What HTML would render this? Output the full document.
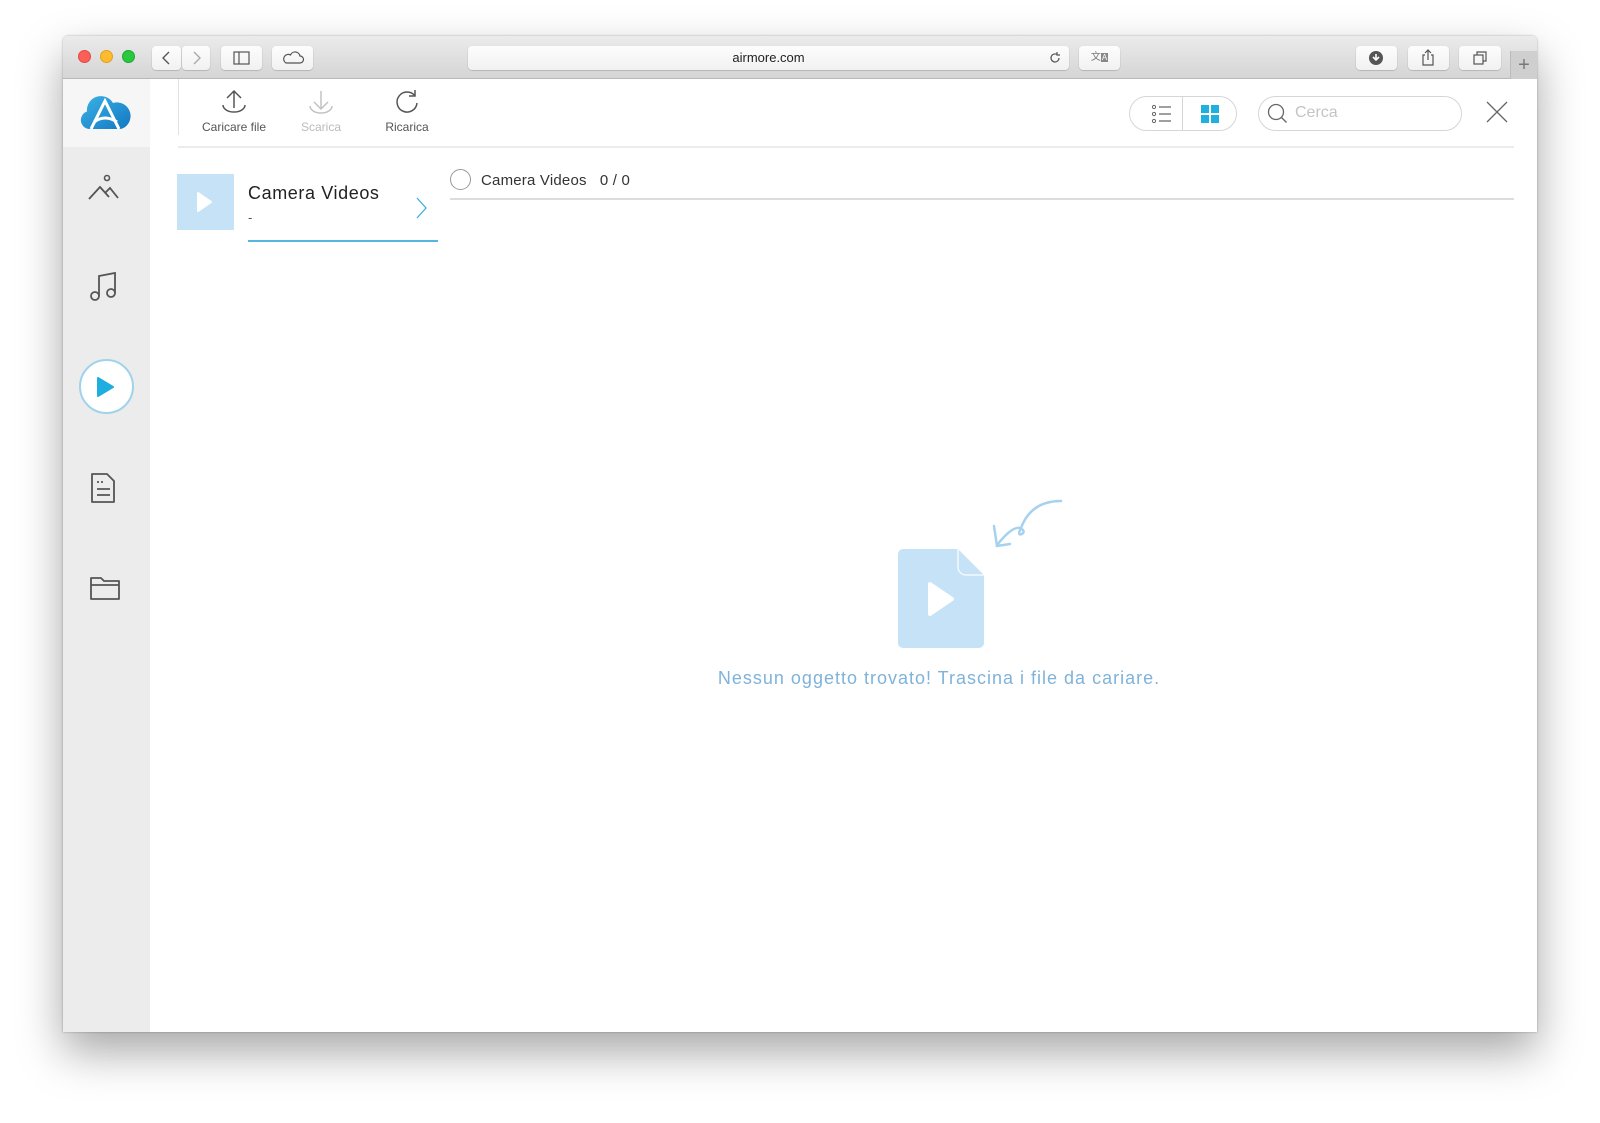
<!DOCTYPE html>
<html><head><meta charset="utf-8"><style>
*{margin:0;padding:0;box-sizing:border-box}
body{width:1600px;height:1123px;background:#fff;position:relative;overflow:hidden;font-family:"Liberation Sans",sans-serif}
.win{position:absolute;left:63px;top:36px;width:1474px;height:996px;background:#fff;border-radius:5px 5px 0 0;box-shadow:0 20px 45px rgba(0,0,0,.35),0 0 2px rgba(0,0,0,.3);overflow:hidden}
.tb{position:absolute;left:0;top:0;width:100%;height:43px;background:linear-gradient(#ebebeb,#d5d5d5);border-bottom:1px solid #b9b9b9}
.dot{position:absolute;top:14px;width:13px;height:13px;border-radius:50%}
.btn{position:absolute;top:10px;height:24px;background:linear-gradient(#fdfdfd,#f1f1f1);border-radius:4px;box-shadow:0 0.5px 1px rgba(0,0,0,.3)}
.abs{position:absolute}
.side{position:absolute;left:0;top:43px;width:87px;height:953px;background:#ececec}
.lbl{position:absolute;font-size:12px;color:#555;text-align:center;width:90px}
</style></head><body>
<div class="win">
 <div class="tb">
  <div class="dot" style="left:15px;background:#fc5f57;border:0.5px solid #de4a42"></div>
  <div class="dot" style="left:37px;background:#fdbc2e;border:0.5px solid #dea123"></div>
  <div class="dot" style="left:59px;background:#28c840;border:0.5px solid #1eab2e"></div>
  <div class="btn" style="left:89px;width:29px"><svg width="29" height="24"><path d="M17 6l-6 6 6 6" stroke="#555" stroke-width="1.4" fill="none"/></svg></div>
  <div class="btn" style="left:119px;width:28px"><svg width="28" height="24"><path d="M12 6l6 6-6 6" stroke="#aaa" stroke-width="1.4" fill="none"/></svg></div>
  <div class="btn" style="left:158px;width:41px"><svg width="41" height="24"><rect x="13" y="6" width="15" height="12" stroke="#555" fill="none" stroke-width="1.2"/><path d="M18 6v12" stroke="#555" stroke-width="1.2"/></svg></div>
  <div class="btn" style="left:209px;width:41px"><svg width="41" height="24"><path d="M14 17h14a3.5 3.5 0 0 0 0-7 5 5 0 0 0-9.5-1 3.8 3.8 0 0 0-4.5 8z" stroke="#555" fill="none" stroke-width="1.2"/></svg></div>
  <div class="btn" style="left:405px;width:601px;text-align:center;font-size:13px;line-height:24px;color:#222">airmore.com<svg class="abs" style="right:6px;top:4px" width="16" height="16"><path d="M12 8a4 4 0 1 1-2-3.5M10 2v3h3" stroke="#555" fill="none" stroke-width="1.2"/></svg></div>
  <div class="btn" style="left:1016px;width:41px;font-size:10px;color:#777;text-align:center;line-height:24px">文<span style="background:#888;color:#fff;font-size:8px;padding:0 1px">A</span></div>
  <div class="btn" style="left:1293px;width:41px"><svg width="41" height="24"><circle cx="20" cy="12" r="7" fill="#555"/><path d="M20 8v6M17 11l3 3 3-3" stroke="#fff" stroke-width="1.6" fill="none"/></svg></div>
  <div class="btn" style="left:1345px;width:41px"><svg width="41" height="24"><path d="M17 9h-2v10h10V9h-2M20 14V4M17 7l3-3 3 3" stroke="#555" fill="none" stroke-width="1.2"/></svg></div>
  <div class="btn" style="left:1396px;width:42px"><svg width="42" height="24"><rect x="15" y="9" width="9" height="9" stroke="#555" fill="none" stroke-width="1.2"/><path d="M18 9V6h9v9h-3" stroke="#555" fill="none" stroke-width="1.2"/></svg></div>
  <div class="abs" style="left:1447px;top:15px;width:27px;height:28px;background:#cfcfcf;border-left:1px solid #bbb;color:#777;font-size:20px;text-align:center;line-height:28px">+</div>
 </div>
 <div class="side">
  <div class="abs" style="left:0;top:0;width:87px;height:68px;background:#f6f6f6"></div>
  <svg class="abs" style="left:16px;top:14px" width="52" height="40" viewBox="0 0 52 40"><defs><linearGradient id="g" x1="0" y1="0" x2="1" y2="1"><stop offset="0" stop-color="#3bb3e6"/><stop offset="1" stop-color="#1477c2"/></linearGradient></defs><path d="M10 36a9 9 0 0 1-2-17.5A14 14 0 0 1 34 10a11 11 0 0 1 8 26z" fill="url(#g)"/><path d="M12 36L26 8l14 28M15 29q11-8 23 0" stroke="#fff" stroke-width="3" fill="none"/></svg>
  <svg class="abs" style="left:24px;top:94px" width="38" height="30"><circle cx="20" cy="5" r="2.5" stroke="#555" fill="none" stroke-width="1.6"/><path d="M2 26l11-12 9 10M18 20l5-5 8 10" stroke="#555" fill="none" stroke-width="1.8"/></svg>
  <svg class="abs" style="left:24px;top:191px" width="34" height="34"><circle cx="8" cy="26" r="4" stroke="#555" fill="none" stroke-width="1.8"/><circle cx="24" cy="23" r="4" stroke="#555" fill="none" stroke-width="1.8"/><path d="M12 26V6l16-3v20" stroke="#555" fill="none" stroke-width="1.8"/></svg>
  <div class="abs" style="left:16px;top:280px;width:55px;height:55px;border-radius:50%;background:#fff;border:2px solid #9fd3ec"></div>
  <svg class="abs" style="left:32px;top:296px" width="24" height="24"><path d="M3 3l15 9-15 9z" fill="#1eaee0" stroke="#1eaee0" stroke-linejoin="round" stroke-width="2"/></svg>
  <svg class="abs" style="left:26px;top:392px" width="30" height="34"><path d="M3 3h15l7 7v21H3z" stroke="#555" fill="none" stroke-width="1.8" stroke-linejoin="round"/><path d="M8 11h2M12 11h2M8 18h13M8 24h13" stroke="#555" stroke-width="1.8"/></svg>
  <svg class="abs" style="left:25px;top:494px" width="34" height="30"><path d="M3 5h10l3 3h15v18H3zM3 12h28" stroke="#555" fill="none" stroke-width="1.8" stroke-linejoin="round"/></svg>
 </div>
 <div class="abs" style="left:115px;top:43px;width:1px;height:56px;background:#e2e2e2"></div>
 <div class="abs" style="left:115px;top:110px;width:1336px;height:2px;background:#ececec"></div>
 <svg class="abs" style="left:156px;top:52px" width="30" height="30"><path d="M15 3v17M8 10l7-7 7 7M4 17a11 7 0 0 0 22 0" stroke="#555" fill="none" stroke-width="1.5"/></svg>
 <div class="lbl" style="left:126px;top:84px">Caricare file</div>
 <svg class="abs" style="left:243px;top:52px" width="30" height="30"><path d="M15 3v18M8 14l7 7 7-7M4 18a11 7 0 0 0 22 0" stroke="#c2c2c2" fill="none" stroke-width="1.5"/></svg>
 <div class="lbl" style="left:213px;top:84px;color:#bbb">Scarica</div>
 <svg class="abs" style="left:329px;top:52px" width="30" height="30"><path d="M23 8A10 10 0 1 0 25 15M23 2v6h-6" stroke="#555" fill="none" stroke-width="1.5"/></svg>
 <div class="lbl" style="left:299px;top:84px">Ricarica</div>
 <div class="abs" style="left:1066px;top:60px;width:108px;height:35px;border:1.5px solid #d6d6d6;border-radius:18px"></div>
 <div class="abs" style="left:1119px;top:60px;width:1px;height:35px;background:#d6d6d6"></div>
 <svg class="abs" style="left:1087px;top:66px" width="24" height="24"><circle cx="4" cy="5" r="1.6" stroke="#666" fill="none"/><circle cx="4" cy="12" r="1.6" stroke="#666" fill="none"/><circle cx="4" cy="19" r="1.6" stroke="#666" fill="none"/><path d="M9 5h12M9 12h12M9 19h12" stroke="#666" stroke-width="1.2"/></svg>
 <div class="abs" style="left:1138px;top:69px;width:8px;height:8px;background:#1fb0e0"></div>
 <div class="abs" style="left:1148px;top:69px;width:8px;height:8px;background:#1fb0e0"></div>
 <div class="abs" style="left:1138px;top:79px;width:8px;height:8px;background:#1fb0e0"></div>
 <div class="abs" style="left:1148px;top:79px;width:8px;height:8px;background:#1fb0e0"></div>
 <div class="abs" style="left:1195px;top:60px;width:204px;height:35px;border:1.5px solid #d6d6d6;border-radius:18px;font-size:16px;color:#c4c4c4;line-height:32px;padding-left:36px">Cerca</div>
 <svg class="abs" style="left:1203px;top:66px" width="24" height="24"><circle cx="10" cy="10" r="7.5" stroke="#666" fill="none" stroke-width="1.3"/><path d="M15.5 15.5l5 5" stroke="#666" stroke-width="1.3"/></svg>
 <svg class="abs" style="left:1422px;top:64px" width="24" height="24"><path d="M2 2l20 20M22 2L2 22" stroke="#666" stroke-width="1.3"/></svg>
 <div class="abs" style="left:114px;top:138px;width:57px;height:56px;background:#c6e2f6"></div>
 <svg class="abs" style="left:132px;top:154px" width="20" height="24"><path d="M3 3l13 9-13 9z" fill="#fff" stroke="#fff" stroke-linejoin="round" stroke-width="2"/></svg>
 <div class="abs" style="left:185px;top:147px;font-size:18px;color:#222;letter-spacing:.6px">Camera Videos</div>
 <div class="abs" style="left:185px;top:174px;font-size:13px;color:#555">-</div>
 <svg class="abs" style="left:352px;top:160px" width="14" height="24"><path d="M2 2l9 10-9 10" stroke="#3bb0df" fill="none" stroke-width="1.3"/></svg>
 <div class="abs" style="left:185px;top:204px;width:190px;height:2px;background:#55b7e0"></div>
 <div class="abs" style="left:387px;top:133px;width:21px;height:21px;border-radius:50%;border:1.3px solid #999"></div>
 <div class="abs" style="left:418px;top:136px;font-size:15px;color:#333;letter-spacing:.2px">Camera Videos&nbsp;&nbsp;&nbsp;0 / 0</div>
 <div class="abs" style="left:387px;top:162px;width:1064px;height:1.5px;background:#dcdcdc"></div>
 <svg class="abs" style="left:835px;top:454px" width="180" height="170"><path d="M0 64a5 5 0 0 1 5-5h55l26 26v68a5 5 0 0 1-5 5H5a5 5 0 0 1-5-5z" fill="#c6e2f6"/><path d="M60 59v18a8 8 0 0 0 8 8h18" stroke="#fff" stroke-width="1.5" fill="none" opacity=".8"/><path d="M32 94l22 15-22 15z" fill="#fff" stroke="#fff" stroke-linejoin="round" stroke-width="4"/><g transform="translate(20,6)"><path d="M143 5q-30 0-40 27q-4 8 1 6q4-3-2-6q-8-2-23 17M76 30l3 20 13-2" stroke="#a6d1ef" fill="none" stroke-width="2.5" stroke-linecap="round"/></g></svg>
 <div class="abs" style="left:526px;top:632px;width:700px;text-align:center;font-size:18px;color:#7fb3da;letter-spacing:1px">Nessun oggetto trovato! Trascina i file da cariare.</div>
</div>
</body></html>
